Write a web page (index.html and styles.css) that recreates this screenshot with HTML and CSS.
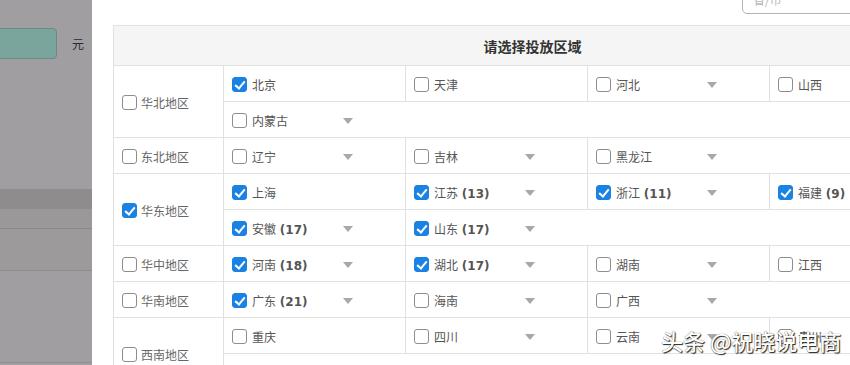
FILE: index.html
```html
<!DOCTYPE html>
<html lang="zh-CN">
<head>
<meta charset="utf-8">
<title>请选择投放区域</title>
<link rel="stylesheet" href="styles.css">
</head>
<body>
<div class="screen">
  <aside class="mask">
    <div class="mask-field"><span class="mask-input"></span><span class="mask-unit">元</span></div>
    <div class="mask-band"></div>
    <div class="mask-zone"></div>
    <div class="mask-zone2"></div>
    <div class="mask-rest"></div>
  </aside>
  <main class="panel">
    <div class="toolbar"><div class="search">省/市</div></div>
    <div class="region-table">
      <div class="table-head">请选择投放区域</div>

      <div class="region-row">
        <div class="region-cell"><span class="cb"></span><span>华北地区</span></div>
        <div class="province-list">
          <div class="sub-row">
            <div class="prov"><span class="cb on"></span><span class="name">北京</span></div>
            <div class="prov"><span class="cb"></span><span class="name">天津</span></div>
            <div class="prov"><span class="cb"></span><span class="name">河北</span><span class="caret"></span></div>
            <div class="prov"><span class="cb"></span><span class="name">山西</span><span class="caret"></span></div>
          </div>
          <div class="sub-row">
            <div class="prov"><span class="cb"></span><span class="name">内蒙古</span><span class="caret"></span></div>
          </div>
        </div>
      </div>

      <div class="region-row">
        <div class="region-cell"><span class="cb"></span><span>东北地区</span></div>
        <div class="province-list">
          <div class="sub-row">
            <div class="prov"><span class="cb"></span><span class="name">辽宁</span><span class="caret"></span></div>
            <div class="prov"><span class="cb"></span><span class="name">吉林</span><span class="caret"></span></div>
            <div class="prov"><span class="cb"></span><span class="name">黑龙江</span><span class="caret"></span></div>
          </div>
        </div>
      </div>

      <div class="region-row">
        <div class="region-cell"><span class="cb on"></span><span>华东地区</span></div>
        <div class="province-list">
          <div class="sub-row">
            <div class="prov"><span class="cb on"></span><span class="name">上海</span></div>
            <div class="prov"><span class="cb on"></span><span class="name">江苏 <b>(13)</b></span><span class="caret"></span></div>
            <div class="prov"><span class="cb on"></span><span class="name">浙江 <b>(11)</b></span><span class="caret"></span></div>
            <div class="prov"><span class="cb on"></span><span class="name">福建 <b>(9)</b></span><span class="caret"></span></div>
          </div>
          <div class="sub-row">
            <div class="prov"><span class="cb on"></span><span class="name">安徽 <b>(17)</b></span><span class="caret"></span></div>
            <div class="prov"><span class="cb on"></span><span class="name">山东 <b>(17)</b></span><span class="caret"></span></div>
          </div>
        </div>
      </div>

      <div class="region-row">
        <div class="region-cell"><span class="cb"></span><span>华中地区</span></div>
        <div class="province-list">
          <div class="sub-row">
            <div class="prov"><span class="cb on"></span><span class="name">河南 <b>(18)</b></span><span class="caret"></span></div>
            <div class="prov"><span class="cb on"></span><span class="name">湖北 <b>(17)</b></span><span class="caret"></span></div>
            <div class="prov"><span class="cb"></span><span class="name">湖南</span><span class="caret"></span></div>
            <div class="prov"><span class="cb"></span><span class="name">江西</span><span class="caret"></span></div>
          </div>
        </div>
      </div>

      <div class="region-row">
        <div class="region-cell"><span class="cb"></span><span>华南地区</span></div>
        <div class="province-list">
          <div class="sub-row">
            <div class="prov"><span class="cb on"></span><span class="name">广东 <b>(21)</b></span><span class="caret"></span></div>
            <div class="prov"><span class="cb"></span><span class="name">海南</span><span class="caret"></span></div>
            <div class="prov"><span class="cb"></span><span class="name">广西</span><span class="caret"></span></div>
          </div>
        </div>
      </div>

      <div class="region-row">
        <div class="region-cell"><span class="cb"></span><span>西南地区</span></div>
        <div class="province-list">
          <div class="sub-row">
            <div class="prov"><span class="cb"></span><span class="name">重庆</span></div>
            <div class="prov"><span class="cb"></span><span class="name">四川</span><span class="caret"></span></div>
            <div class="prov"><span class="cb"></span><span class="name">云南</span><span class="caret"></span></div>
            <div class="prov"><span class="cb"></span><span class="name">贵州</span><span class="caret"></span></div>
          </div>
          <div class="sub-row">
            <div class="prov"><span class="cb"></span><span class="name">西藏</span><span class="caret"></span></div>
          </div>
        </div>
      </div>
    </div>
  </main>
  <div class="watermark">头条 @祝晓说电商</div>
</div>
</body>
</html>
```

FILE: styles.css
```css
html, body {
  margin: 0;
  padding: 0;
  background: #fff;
}
body {
  font-family: "DejaVu Sans", "Noto Sans CJK SC", sans-serif;
  font-size: 12px;
  color: #555;
}
.screen {
  position: relative;
  display: flex;
  width: 850px;
  height: 365px;
  overflow: hidden;
}

/* dimmed page on the left */
.mask {
  flex: none;
  width: 92px;
  height: 365px;
  background: #a09ea0;
  display: flex;
  flex-direction: column;
  padding-top: 28px;
  box-sizing: border-box;
  overflow: hidden;
}
.mask-field {
  display: flex;
  align-items: center;
  height: 31px;
}
.mask-input {
  flex: none;
  width: 67px;
  height: 31px;
  margin-left: -10px;
  box-sizing: border-box;
  background: #79a59c;
  border: 1px solid #6a8b85;
  border-radius: 4px;
}
.mask-unit {
  margin-left: 15px;
  font-family: "Noto Sans CJK SC", sans-serif;
  font-size: 12px;
  color: #2a2a2a;
}
.mask-band {
  margin-top: 130px;
  height: 20px;
  background: #8f8c8e;
}
.mask-zone {
  height: 19px;
  background: #9b989a;
  border-bottom: 1px solid #8c898b;
}
.mask-zone2 {
  height: 41px;
  background: #9d9a9c;
  border-bottom: 1px solid #8e8b8d;
}
.mask-rest {
  height: 91px;
  border-bottom: 1px solid #939092;
}

/* panel */
.panel {
  flex: none;
  width: 758px;
  padding-left: 21px;
  box-sizing: border-box;
  overflow: hidden;
}
.toolbar {
  height: 25px;
  display: flex;
  justify-content: flex-end;
}
.search {
  flex: none;
  width: 128px;
  height: 30px;
  margin-top: -16px;
  margin-right: -20px;
  box-sizing: border-box;
  border: 1px solid #b5b5b5;
  border-radius: 5px;
  padding-left: 10px;
  display: flex;
  align-items: center;
  font-family: "Noto Sans CJK SC", sans-serif;
  color: #b8b8b8;
}
.region-table {
  width: 838px;
  border-top: 1px solid #e1e1e1;
  border-left: 1px solid #e1e1e1;
  box-sizing: border-box;
}
.table-head {
  height: 40px;
  box-sizing: border-box;
  border-bottom: 1px solid #e1e1e1;
  background: #f5f5f5;
  display: flex;
  align-items: center;
  justify-content: center;
  font-family: "Noto Sans CJK SC", sans-serif;
  font-size: 14px;
  font-weight: bold;
  color: #333;
}
.region-row {
  display: flex;
  border-bottom: 1px solid #e1e1e1;
}
.region-cell {
  flex: none;
  width: 109px;
  box-sizing: border-box;
  padding-left: 8px;
  padding-top: 2px;
  display: flex;
  align-items: center;
  gap: 4px;
  color: #666;
}
.province-list {
  flex: none;
  display: flex;
  flex-direction: column;
}
.sub-row {
  display: flex;
  height: 36px;
  box-sizing: border-box;
  border-bottom: 1px solid #e1e1e1;
}
.sub-row:last-child {
  height: 35px;
  border-bottom: none;
}
.prov {
  flex: none;
  width: 182px;
  box-sizing: border-box;
  border-left: 1px solid #e1e1e1;
  padding-left: 8px;
  padding-top: 2px;
  display: flex;
  align-items: center;
}
.name {
  flex: none;
  width: 91px;
  margin-left: 5px;
  white-space: nowrap;
  color: #555;
}
.name b {
  color: #555;
}
.caret {
  flex: none;
  width: 0;
  height: 0;
  border-top: 6px solid #a8a8a8;
  border-left: 5px solid transparent;
  border-right: 5px solid transparent;
  margin-top: 1px;
}

/* checkbox */
.cb {
  flex: none;
  position: relative;
  width: 15px;
  height: 15px;
  box-sizing: border-box;
  border: 1px solid #8d8d8d;
  border-radius: 3px;
  background: #fff;
}
.cb.on {
  border-color: #1a82e2;
  background: #1a82e2;
}
.cb.on::after {
  content: "";
  position: absolute;
  left: 4px;
  top: 1px;
  width: 4px;
  height: 8px;
  border-right: 2px solid #fff;
  border-bottom: 2px solid #fff;
  transform: rotate(40deg);
}

/* watermark overlay */
.watermark {
  position: absolute;
  left: 661px;
  top: 327px;
  font-family: "Noto Sans CJK SC", sans-serif;
  font-size: 22px;
  font-weight: 500;
  line-height: 26px;
  color: #fff;
  white-space: nowrap;
  text-shadow: 1px 1px 1px rgba(0, 0, 0, 0.85), 0 0 1px rgba(0, 0, 0, 0.7);
}
```
